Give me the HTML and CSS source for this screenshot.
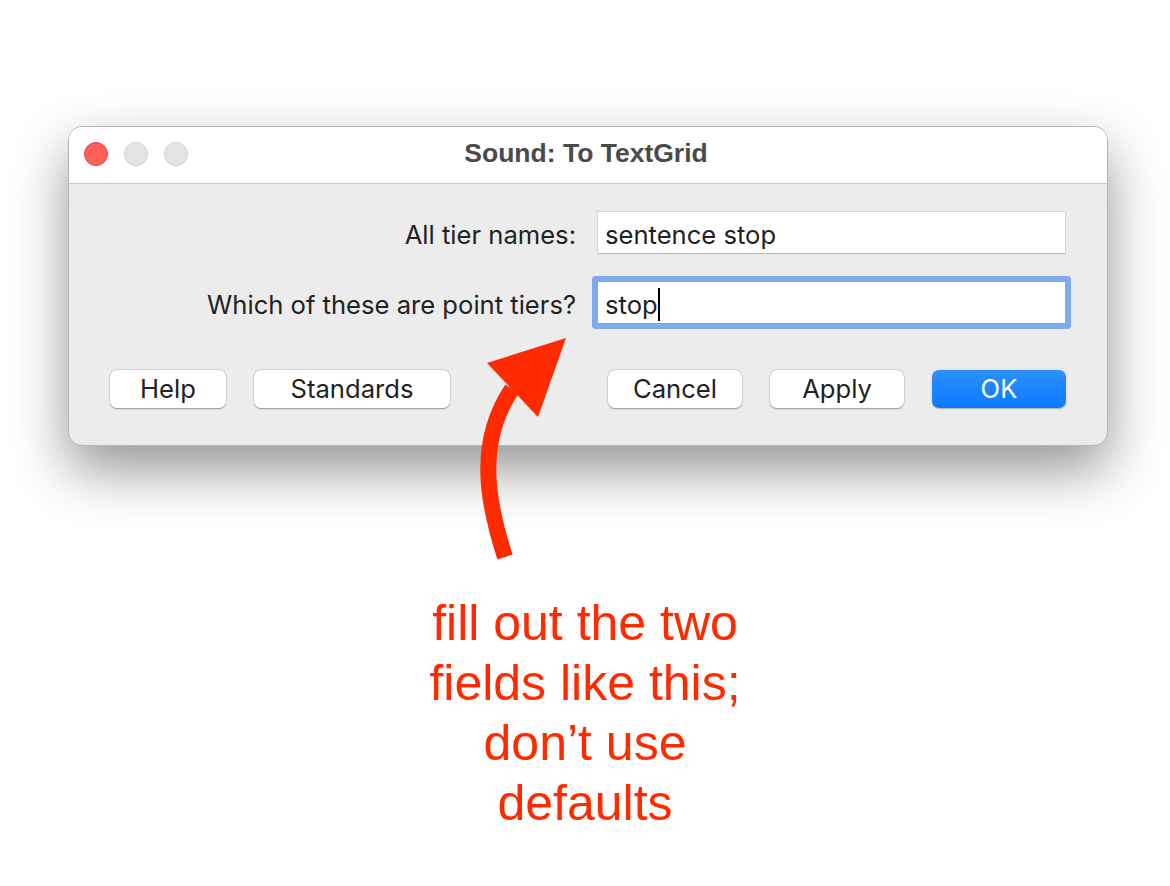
FILE: index.html
```html
<!DOCTYPE html>
<html lang="en">
<head>
<meta charset="utf-8">
<title>Sound: To TextGrid</title>
<link rel="stylesheet" href="styles.css">
</head>
<body>
<div class="page">
  <div class="window">
    <div class="titlebar">
      <div class="lights">
        <span class="light close"></span>
        <span class="light"></span>
        <span class="light"></span>
      </div>
      <div class="title">Sound: To TextGrid</div>
    </div>
    <div class="content">
      <div class="form">
        <label class="label">All tier names:</label>
        <div class="field">sentence stop</div>
        <label class="label">Which of these are point tiers?</label>
        <div class="field focused"><span class="caret">stop</span></div>
      </div>
      <div class="buttons">
        <div class="group">
          <button class="btn help">Help</button>
          <button class="btn standards">Standards</button>
        </div>
        <div class="group">
          <button class="btn wide">Cancel</button>
          <button class="btn wide">Apply</button>
          <button class="btn wide primary">OK</button>
        </div>
      </div>
    </div>
  </div>
  <div class="caption">fill out the two<br>fields like this;<br>don’t use<br>defaults</div>
  <svg class="arrow" width="1170" height="886" viewBox="0 0 1170 886">
    <path d="M505 557 C485 495 478 440 512 389" fill="none" stroke="#ff2a00" stroke-width="16"/>
    <polygon points="487,363 566,338 538,417" fill="#ff2a00"/>
  </svg>
</div>
</body>
</html>
```
FILE: styles.css
```css
html, body {
  margin: 0;
  padding: 0;
  background: #ffffff;
}
.page {
  position: relative;
  width: 1170px;
  height: 886px;
  overflow: hidden;
  padding-top: 126px;
  box-sizing: border-box;
  font-family: "Inter", "Liberation Sans", sans-serif;
}
.window {
  margin-left: 68px;
  width: 1040px;
  height: 320px;
  box-sizing: border-box;
  border: 1px solid #b4b4b4;
  border-radius: 14px;
  background: #ececec;
  overflow: hidden;
  box-shadow: 0 24px 55px rgba(0, 0, 0, 0.42);
}
.titlebar {
  position: relative;
  height: 56px;
  background: #ffffff;
  border-bottom: 1px solid #c8c8c8;
  display: flex;
  align-items: center;
  justify-content: center;
}
.lights {
  position: absolute;
  left: 15px;
  top: 15px;
  display: flex;
  gap: 16px;
}
.light {
  width: 24px;
  height: 24px;
  border-radius: 50%;
  box-sizing: border-box;
  background: #e4e4e4;
  border: 1px solid #cdcdcd;
}
.light.close {
  background: #fe5f57;
  border-color: #e0443e;
}
.title {
  font-family: "Liberation Sans", Arial, sans-serif;
  font-weight: bold;
  font-size: 26.5px;
  color: #4a4a4a;
  margin-left: -4px;
  padding-bottom: 3px;
}
.content {
  padding: 27px 41px 0 41px;
}
.form {
  display: grid;
  grid-template-columns: 466px 469px;
  column-gap: 21px;
  row-gap: 27px;
  align-items: center;
}
.label {
  text-align: right;
  font-size: 25.6px;
  color: #222222;
  padding-top: 4px;
}
.field {
  height: 43px;
  box-sizing: border-box;
  background: #ffffff;
  border: 1px solid #d6d6d6;
  border-bottom-color: #b8b8b8;
  padding: 3px 7px 0 7px;
  display: flex;
  align-items: center;
  font-size: 25.6px;
  color: #222222;
}
.field.focused {
  border: 1px solid #7aa7ee;
  box-shadow: 0 0 0 5px #7eaaf0;
  border-radius: 1px;
}
.caret {
  border-right: 2px solid #000000;
  line-height: 33px;
}
.buttons {
  margin-top: 46px;
  display: flex;
  justify-content: space-between;
}
.group {
  display: flex;
  gap: 28px;
}
.btn {
  height: 38px;
  border: none;
  border-radius: 7px;
  background: #ffffff;
  box-shadow: 0 0.5px 1.5px rgba(0, 0, 0, 0.35), 0 0 0 0.5px rgba(0, 0, 0, 0.08);
  font-family: "Inter", "Liberation Sans", sans-serif;
  font-size: 25.6px;
  color: #222222;
  padding: 0 0 2px 0;
}
.btn.help { width: 116px; }
.btn.standards { width: 196px; }
.btn.wide { width: 134px; }
.btn.primary {
  background: linear-gradient(#2d90fd, #0a7bff);
  color: #ffffff;
  box-shadow: 0 0.5px 1.5px rgba(0, 0, 0, 0.25);
}
.caption {
  margin-top: 147px;
  text-align: center;
  font-family: "Liberation Sans", Arial, sans-serif;
  font-size: 50px;
  line-height: 60px;
  color: #ff2a00;
}
.arrow {
  position: absolute;
  left: 0;
  top: 0;
  pointer-events: none;
}
```
